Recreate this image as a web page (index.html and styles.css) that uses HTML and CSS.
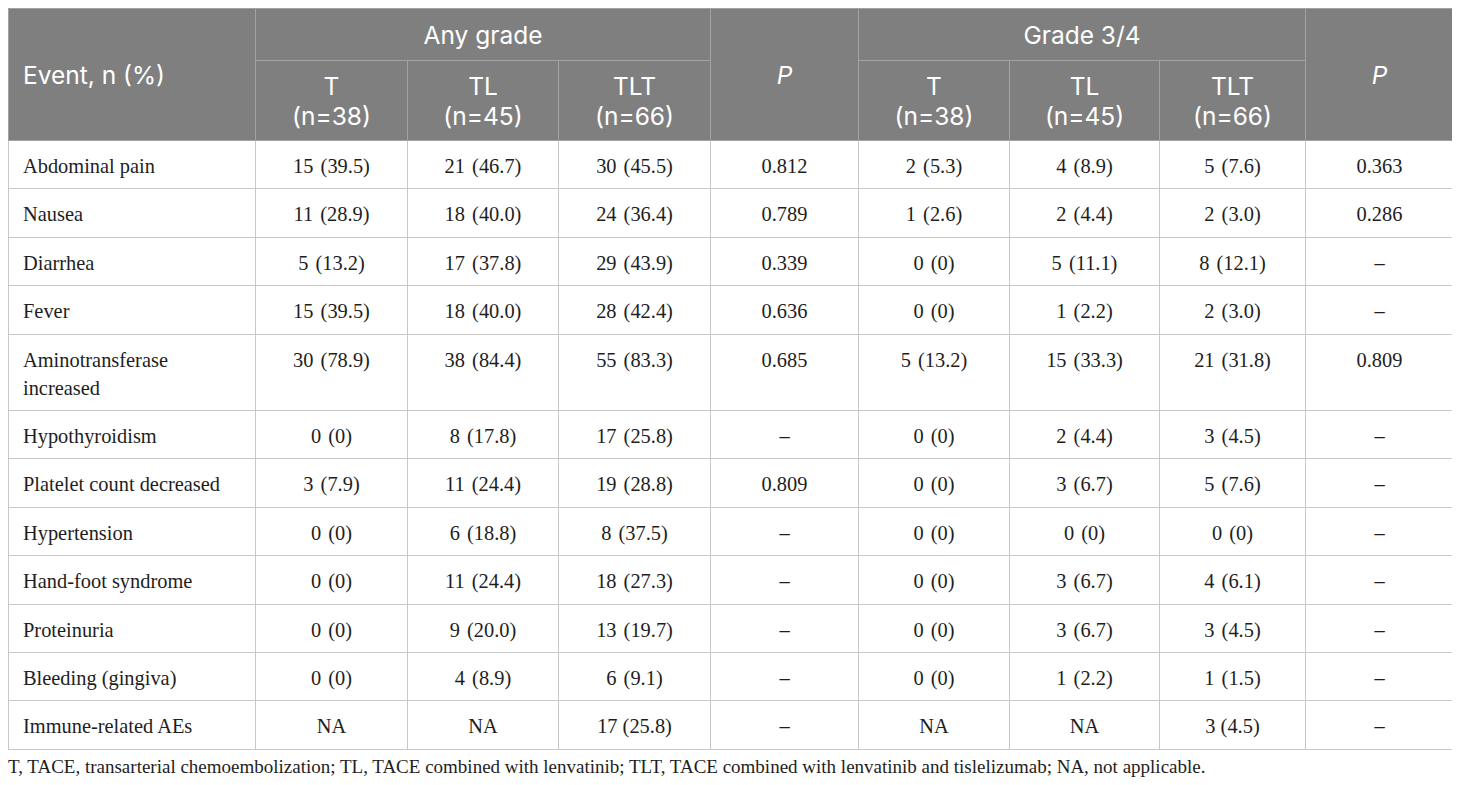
FILE: index.html
```html
<!DOCTYPE html>
<html lang="en">
<head>
<meta charset="utf-8">
<title>Adverse events</title>
<link rel="stylesheet" href="styles.css">
</head>
<body>
<table class="ae-table">
  <colgroup>
    <col class="c-event">
    <col class="c-152"><col class="c-151"><col class="c-152"><col class="c-148">
    <col class="c-151"><col class="c-150"><col class="c-146"><col class="c-148">
  </colgroup>
  <thead>
    <tr class="hr1">
      <th rowspan="2" class="th-event">Event, n (%)</th>
      <th colspan="3">Any grade</th>
      <th rowspan="2"><i>P</i></th>
      <th colspan="3">Grade 3/4</th>
      <th rowspan="2"><i>P</i></th>
    </tr>
    <tr class="hr2">
      <th>T<br>(n=38)</th>
      <th>TL<br>(n=45)</th>
      <th>TLT<br>(n=66)</th>
      <th>T<br>(n=38)</th>
      <th>TL<br>(n=45)</th>
      <th>TLT<br>(n=66)</th>
    </tr>
  </thead>
  <tbody>
    <tr><td>Abdominal pain</td><td>15 (39.5)</td><td>21 (46.7)</td><td>30 (45.5)</td><td>0.812</td><td>2 (5.3)</td><td>4 (8.9)</td><td>5 (7.6)</td><td>0.363</td></tr>
    <tr><td>Nausea</td><td>11 (28.9)</td><td>18 (40.0)</td><td>24 (36.4)</td><td>0.789</td><td>1 (2.6)</td><td>2 (4.4)</td><td>2 (3.0)</td><td>0.286</td></tr>
    <tr><td>Diarrhea</td><td>5 (13.2)</td><td>17 (37.8)</td><td>29 (43.9)</td><td>0.339</td><td>0 (0)</td><td>5 (11.1)</td><td>8 (12.1)</td><td>–</td></tr>
    <tr><td>Fever</td><td>15 (39.5)</td><td>18 (40.0)</td><td>28 (42.4)</td><td>0.636</td><td>0 (0)</td><td>1 (2.2)</td><td>2 (3.0)</td><td>–</td></tr>
    <tr><td>Aminotransferase increased</td><td>30 (78.9)</td><td>38 (84.4)</td><td>55 (83.3)</td><td>0.685</td><td>5 (13.2)</td><td>15 (33.3)</td><td>21 (31.8)</td><td>0.809</td></tr>
    <tr><td>Hypothyroidism</td><td>0 (0)</td><td>8 (17.8)</td><td>17 (25.8)</td><td>–</td><td>0 (0)</td><td>2 (4.4)</td><td>3 (4.5)</td><td>–</td></tr>
    <tr><td>Platelet count decreased</td><td>3 (7.9)</td><td>11 (24.4)</td><td>19 (28.8)</td><td>0.809</td><td>0 (0)</td><td>3 (6.7)</td><td>5 (7.6)</td><td>–</td></tr>
    <tr><td>Hypertension</td><td>0 (0)</td><td>6 (18.8)</td><td>8 (37.5)</td><td>–</td><td>0 (0)</td><td>0 (0)</td><td>0 (0)</td><td>–</td></tr>
    <tr><td>Hand-foot syndrome</td><td>0 (0)</td><td>11 (24.4)</td><td>18 (27.3)</td><td>–</td><td>0 (0)</td><td>3 (6.7)</td><td>4 (6.1)</td><td>–</td></tr>
    <tr><td>Proteinuria</td><td>0 (0)</td><td>9 (20.0)</td><td>13 (19.7)</td><td>–</td><td>0 (0)</td><td>3 (6.7)</td><td>3 (4.5)</td><td>–</td></tr>
    <tr><td>Bleeding (gingiva)</td><td>0 (0)</td><td>4 (8.9)</td><td>6 (9.1)</td><td>–</td><td>0 (0)</td><td>1 (2.2)</td><td>1 (1.5)</td><td>–</td></tr>
    <tr class="last"><td>Immune-related AEs</td><td>NA</td><td>NA</td><td>17 (25.8)</td><td>–</td><td>NA</td><td>NA</td><td>3 (4.5)</td><td>–</td></tr>
  </tbody>
</table>
<p class="footnote">T, TACE, transarterial chemoembolization; TL, TACE combined with lenvatinib; TLT, TACE combined with lenvatinib and tislelizumab; NA, not applicable.</p>
</body>
</html>
```

FILE: styles.css
```css
body {
  margin: 8px;
  background: #ffffff;
  font-family: "Liberation Serif", "Times New Roman", serif;
  color: #1e1e1e;
}

.ae-table {
  border-collapse: collapse;
  table-layout: fixed;
  width: 1445px;
  border: 1px solid #cfcfcf;
}

.c-event { width: 247px; }
.c-152 { width: 152px; }
.c-151 { width: 151px; }
.c-148 { width: 148px; }
.c-150 { width: 150px; }
.c-146 { width: 146px; }

.ae-table th {
  background: #7f7f7f;
  color: #ffffff;
  font-family: Inter, "Open Sans", sans-serif;
  font-weight: 400;
  font-size: 24.5px;
  line-height: 30px;
  text-align: center;
  vertical-align: middle;
  border: 1px solid #a3a3a3;
  padding: 0 10px;
}

.ae-table th i {
  font-style: italic;
}

.ae-table .th-event {
  text-align: left;
  padding-left: 14px;
}

.hr1 { height: 52px; }
.hr2 { height: 80px; }

.ae-table td {
  font-size: 20.4px;
  line-height: 28px;
  padding: 11px 10px 8.4px;
  text-align: center;
  vertical-align: top;
  border: 1px solid #c8c8c8;
  word-spacing: 2px;
}

.ae-table td:first-child {
  text-align: left;
  padding-left: 14px;
  padding-right: 14px;
  word-spacing: 0;
}

.ae-table .last td {
  word-spacing: 0;
}

.footnote {
  margin: 5px 0 0;
  font-size: 19px;
  line-height: 24px;
  color: #1e1e1e;
}
```
